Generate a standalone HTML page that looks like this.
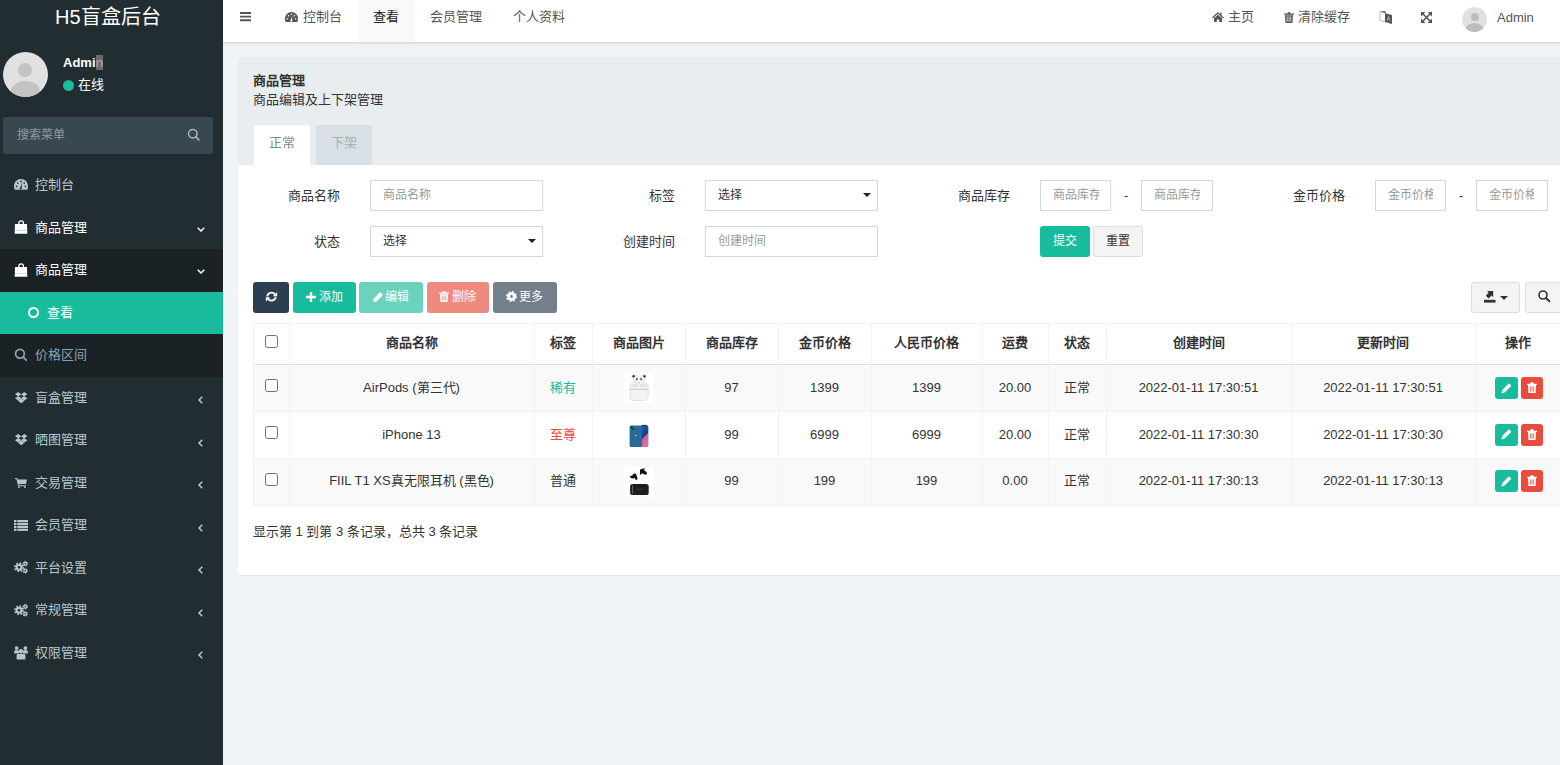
<!DOCTYPE html>
<html lang="zh-CN"><head><meta charset="utf-8">
<style>
*{box-sizing:border-box;margin:0;padding:0}
html,body{width:1560px;height:765px;overflow:hidden}
body{font-family:"Liberation Sans",sans-serif;font-size:13px;color:#333;background:#f1f4f6;position:relative}
.a{position:absolute}
.t{position:absolute;white-space:nowrap}
svg{position:absolute;display:block;overflow:visible}
#sb{left:0;top:0;width:223px;height:765px;background:#222d32}
.mi{position:absolute;left:0;width:223px;height:42.5px}
.mi .tx{position:absolute;left:35px;top:0;line-height:42px;font-size:13px;color:#b8c7ce;white-space:nowrap}
#hd{left:223px;top:0;width:1337px;height:42px;background:#fff}
.nt{position:absolute;top:0;height:42px;line-height:33px;color:#555;font-size:13px;white-space:nowrap}
#pn{left:238px;top:57px;width:1340px;height:518px;background:#fff;border-radius:3px;overflow:hidden;box-shadow:0 1px 1px rgba(0,0,0,.06)}
.lbl{position:absolute;font-size:13px;color:#333;line-height:31px;white-space:nowrap;text-align:right}
.inp{position:absolute;height:31px;border:1px solid #d2d6de;background:#fff;font-size:12px;color:#999;line-height:29px;padding-left:12px;white-space:nowrap;overflow:hidden}
.btn{position:absolute;height:31px;top:282px;border-radius:3px;color:#fff;font-size:12px;line-height:31px;white-space:nowrap}
.hl{position:absolute;background:#f2f2f2}
.th{position:absolute;top:323px;height:41px;line-height:40px;text-align:center;font-weight:bold;font-size:13px;color:#333;white-space:nowrap}
.td{position:absolute;height:46.5px;line-height:46px;text-align:center;font-size:13px;color:#333;white-space:nowrap}
.cb{position:absolute;left:265px;width:13px;height:13px;border:1.3px solid #6f6f6f;border-radius:2.5px;background:#fff}
.ob{position:absolute;width:22px;height:22px;border-radius:3px}
</style></head><body>

<!-- SIDEBAR -->
<div id="sb" class="a">
  <div class="t" style="left:55px;top:4px;font-size:20px;line-height:26px;color:#fff">H5盲盒后台</div>
  <div class="a" style="left:3px;top:52px;width:45px;height:45px;border-radius:50%;background:#e1e1e1;overflow:hidden">
    <div class="a" style="left:15px;top:11px;width:14px;height:14px;border-radius:50%;background:#c3c3c3"></div>
    <div class="a" style="left:8px;top:29px;width:29px;height:20px;border-radius:50%;background:#c3c3c3"></div>
  </div>
  <div class="t" style="left:63px;top:54px;font-size:13px;font-weight:bold;color:#fff;line-height:18px">Admi<span style="background:#6b6b6b;color:#9a9a9a">n</span></div>
  <div class="a" style="left:63px;top:80px;width:11px;height:11px;border-radius:50%;background:#18bc9c"></div>
  <div class="t" style="left:78px;top:76px;font-size:13px;color:#fff;line-height:18px">在线</div>
  <div class="a" style="left:3px;top:117px;width:210px;height:37px;border-radius:3px;background:#374850">
    <div class="t" style="left:14px;top:0;line-height:37px;font-size:12px;color:#999">搜索菜单</div>
    <svg style="left:185px;top:12.3px" width="12" height="12" viewBox="0 0 12 12"><circle cx="4.8" cy="4.8" r="4.2" fill="none" stroke="#b4b4b4" stroke-width="1.5"/><path d="M7.8 7.8L11 11" stroke="#b4b4b4" stroke-width="1.7" stroke-linecap="round"/></svg>
  </div>

  <div class="mi" style="top:164px">
    <svg style="left:14px;top:15.2px" width="14" height="10.8" viewBox="0 0 14 10.8"><path d="M7 0C3 0 0 3.2 0 7.2c0 1.3.3 2.5.7 3.6h12.6c.4-1.1.7-2.3.7-3.6C14 3.2 11 0 7 0z" fill="#b8c7ce"/><g fill="#222d32"><circle cx="2.6" cy="7.3" r=".85"/><circle cx="3.8" cy="4" r=".85"/><circle cx="7" cy="2.4" r=".85"/><circle cx="10.2" cy="4" r=".85"/><circle cx="11.4" cy="7.3" r=".85"/><path d="M8.1 3.6L7.6 8.3A1.15 1.15 0 1 1 6.4 8.2z"/></g></svg>
    <div class="tx">控制台</div>
  </div>
  <div class="mi" style="top:206.5px">
    <svg style="left:14px;top:13.5px" width="14" height="14" viewBox="0 0 14 14"><path d="M1 4h12l.3 9.8H.7z" fill="#fff"/><path d="M4.85 6.5V3.1a2.3 2.3 0 0 1 4.6 0V6.5" fill="none" stroke="#fff" stroke-width="1.3"/><path d="M1 10.4h12" stroke="#c8c8c8" stroke-width=".8"/></svg>
    <div class="tx" style="color:#fff">商品管理</div>
    <svg style="left:197px;top:20px" width="8" height="5" viewBox="0 0 8 5"><path d="M.7.7L4 4 7.3.7" fill="none" stroke="#fff" stroke-width="1.5"/></svg>
  </div>
  <div class="mi" style="top:249px;background:#1a2226">
    <svg style="left:14px;top:13.5px" width="14" height="14" viewBox="0 0 14 14"><path d="M1 4h12l.3 9.8H.7z" fill="#fff"/><path d="M4.85 6.5V3.1a2.3 2.3 0 0 1 4.6 0V6.5" fill="none" stroke="#fff" stroke-width="1.3"/><path d="M1 10.4h12" stroke="#c8c8c8" stroke-width=".8"/></svg>
    <div class="tx" style="color:#fff">商品管理</div>
    <svg style="left:197px;top:20px" width="8" height="5" viewBox="0 0 8 5"><path d="M.7.7L4 4 7.3.7" fill="none" stroke="#fff" stroke-width="1.5"/></svg>
  </div>
  <div class="mi" style="top:291.5px;background:#18bc9c">
    <div class="a" style="left:28px;top:15.5px;width:11px;height:11px;border-radius:50%;border:2px solid #fff"></div>
    <div class="tx" style="left:47px;color:#fff">查看</div>
  </div>
  <div class="mi" style="top:334px;background:#1a2226">
    <svg style="left:15px;top:15px" width="12" height="12" viewBox="0 0 12 12"><circle cx="4.95" cy="4.8" r="4.4" fill="none" stroke="#8aa4af" stroke-width="1.7"/><path d="M8.3 8.2L11.3 11.2" stroke="#8aa4af" stroke-width="1.9" stroke-linecap="round"/></svg>
    <div class="tx" style="color:#8aa4af">价格区间</div>
  </div>
  <div class="mi" style="top:376.5px">
    <svg style="left:14.8px;top:15.2px" width="12.4" height="11.6" viewBox="0 0 12 11"><path d="M3 0L0 2 3 4 0 6 3 8 6 6 9 8 12 6 9 4 12 2 9 0 6 2z M6 2.3L8.6 4 6 5.7 3.4 4z" fill="#b8c7ce" fill-rule="evenodd"/><path d="M2.8 8.3L6 10.9 9.2 8.3 6 6.3z" fill="#b8c7ce"/></svg>
    <div class="tx">盲盒管理</div>
    <svg style="left:198px;top:19.5px" width="5" height="8" viewBox="0 0 5 8"><path d="M4.3.7L1 4l3.3 3.3" fill="none" stroke="#b8c7ce" stroke-width="1.5"/></svg>
  </div>
  <div class="mi" style="top:419px">
    <svg style="left:14.8px;top:15.2px" width="12.4" height="11.6" viewBox="0 0 12 11"><path d="M3 0L0 2 3 4 0 6 3 8 6 6 9 8 12 6 9 4 12 2 9 0 6 2z M6 2.3L8.6 4 6 5.7 3.4 4z" fill="#b8c7ce" fill-rule="evenodd"/><path d="M2.8 8.3L6 10.9 9.2 8.3 6 6.3z" fill="#b8c7ce"/></svg>
    <div class="tx">晒图管理</div>
    <svg style="left:198px;top:19.5px" width="5" height="8" viewBox="0 0 5 8"><path d="M4.3.7L1 4l3.3 3.3" fill="none" stroke="#b8c7ce" stroke-width="1.5"/></svg>
  </div>
  <div class="mi" style="top:461.5px">
    <svg style="left:15px;top:16.5px" width="12" height="10" viewBox="0 0 12 10"><path d="M0 0h2.2l.5 1.5H12l-1 4.5H3.6l.4 1.2H11v1H3.2L1.4 1H0z" fill="#b8c7ce"/><circle cx="4" cy="9.2" r=".9" fill="#b8c7ce"/><circle cx="10" cy="9.2" r=".9" fill="#b8c7ce"/></svg>
    <div class="tx">交易管理</div>
    <svg style="left:198px;top:19.5px" width="5" height="8" viewBox="0 0 5 8"><path d="M4.3.7L1 4l3.3 3.3" fill="none" stroke="#b8c7ce" stroke-width="1.5"/></svg>
  </div>
  <div class="mi" style="top:504px">
    <svg style="left:14px;top:15.5px" width="14" height="11" viewBox="0 0 14 11"><g fill="#b8c7ce"><rect x="0" y="0" width="2.5" height="2.2"/><rect x="0" y="2.9" width="2.5" height="2.2"/><rect x="0" y="5.8" width="2.5" height="2.2"/><rect x="0" y="8.7" width="2.5" height="2.2"/><rect x="3.3" y="0" width="10.7" height="2.2"/><rect x="3.3" y="2.9" width="10.7" height="2.2"/><rect x="3.3" y="5.8" width="10.7" height="2.2"/><rect x="3.3" y="8.7" width="10.7" height="2.2"/></g></svg>
    <div class="tx">会员管理</div>
    <svg style="left:198px;top:19.5px" width="5" height="8" viewBox="0 0 5 8"><path d="M4.3.7L1 4l3.3 3.3" fill="none" stroke="#b8c7ce" stroke-width="1.5"/></svg>
  </div>
  <div class="mi" style="top:546.5px">
    <svg style="left:14px;top:14.6px" width="14.2" height="13.2" viewBox="0 0 15 14"><g fill="none" stroke="#b8c7ce"><circle cx="5.3" cy="6.7" r="2.6" stroke-width="2.3"/><circle cx="5.3" cy="6.7" r="4.4" stroke-width="1.8" stroke-dasharray="1.75 1.7"/><circle cx="11.9" cy="2.9" r="1.55" stroke-width="1.5"/><circle cx="11.9" cy="2.9" r="2.6" stroke-width="1" stroke-dasharray="1.2 1.52"/><circle cx="11.9" cy="10.4" r="1.55" stroke-width="1.5"/><circle cx="11.9" cy="10.4" r="2.6" stroke-width="1" stroke-dasharray="1.2 1.52"/></g></svg>
    <div class="tx">平台设置</div>
    <svg style="left:198px;top:19.5px" width="5" height="8" viewBox="0 0 5 8"><path d="M4.3.7L1 4l3.3 3.3" fill="none" stroke="#b8c7ce" stroke-width="1.5"/></svg>
  </div>
  <div class="mi" style="top:589px">
    <svg style="left:14px;top:14.6px" width="14.2" height="13.2" viewBox="0 0 15 14"><g fill="none" stroke="#b8c7ce"><circle cx="5.3" cy="6.7" r="2.6" stroke-width="2.3"/><circle cx="5.3" cy="6.7" r="4.4" stroke-width="1.8" stroke-dasharray="1.75 1.7"/><circle cx="11.9" cy="2.9" r="1.55" stroke-width="1.5"/><circle cx="11.9" cy="2.9" r="2.6" stroke-width="1" stroke-dasharray="1.2 1.52"/><circle cx="11.9" cy="10.4" r="1.55" stroke-width="1.5"/><circle cx="11.9" cy="10.4" r="2.6" stroke-width="1" stroke-dasharray="1.2 1.52"/></g></svg>
    <div class="tx">常规管理</div>
    <svg style="left:198px;top:19.5px" width="5" height="8" viewBox="0 0 5 8"><path d="M4.3.7L1 4l3.3 3.3" fill="none" stroke="#b8c7ce" stroke-width="1.5"/></svg>
  </div>
  <div class="mi" style="top:631.5px">
    <svg style="left:14px;top:14px" width="14" height="14" viewBox="0 0 14 14"><g fill="#b8c7ce"><circle cx="2.6" cy="2.1" r="1.9"/><circle cx="11.4" cy="2.1" r="1.9"/><path d="M.2 7.6V5.6c0-.8.5-1.3 1.3-1.3h2.4c.8 0 1 .5 1 1.2v2.1z"/><path d="M13.8 7.6V5.6c0-.8-.5-1.3-1.3-1.3h-2.4c-.8 0-1 .5-1 1.2v2.1z"/><circle cx="7" cy="5.3" r="2.2"/><path d="M2.6 13.6V9.5c0-1 .6-1.6 1.6-1.6h5.6c1 0 1.6.6 1.6 1.6v4.1z"/></g></svg>
    <div class="tx">权限管理</div>
    <svg style="left:198px;top:19.5px" width="5" height="8" viewBox="0 0 5 8"><path d="M4.3.7L1 4l3.3 3.3" fill="none" stroke="#b8c7ce" stroke-width="1.5"/></svg>
  </div>
</div>

<!-- HEADER -->
<div id="hd" class="a">
  <svg style="left:17px;top:12px" width="11" height="9" viewBox="0 0 11 9"><path d="M0 1h11M0 4.6h11M0 8.2h11" stroke="#555" stroke-width="1.9"/></svg>
  <div class="a" style="left:135px;top:0;width:57px;height:42px;background:#f9f9f9"></div>
  <svg style="left:62px;top:11.8px" width="13" height="10" viewBox="0 0 14 10.8"><path d="M7 0C3 0 0 3.2 0 7.2c0 1.3.3 2.5.7 3.6h12.6c.4-1.1.7-2.3.7-3.6C14 3.2 11 0 7 0z" fill="#555"/><g fill="#fff"><circle cx="2.6" cy="7.3" r=".85"/><circle cx="3.8" cy="4" r=".85"/><circle cx="7" cy="2.4" r=".85"/><circle cx="10.2" cy="4" r=".85"/><circle cx="11.4" cy="7.3" r=".85"/><path d="M8.1 3.6L7.6 8.3A1.15 1.15 0 1 1 6.4 8.2z"/></g></svg>
  <div class="nt" style="left:80px">控制台</div>
  <div class="nt" style="left:150px;color:#222">查看</div>
  <div class="nt" style="left:207px">会员管理</div>
  <div class="nt" style="left:290px">个人资料</div>
  <svg style="left:989px;top:12px" width="12" height="10" viewBox="0 0 12 10"><path d="M6 0L0 5.6l.8.9L6 1.8l5.2 4.7.8-.9L9.6 3.4V.6H8.2v1.6z" fill="#555"/><path d="M2 6.2L6 2.7l4 3.5V10H7.2V7.4H4.8V10H2z" fill="#555"/></svg>
  <div class="nt" style="left:1005px">主页</div>
  <svg style="left:1061px;top:12px" width="10" height="11" viewBox="0 0 10 11"><path d="M0 1.6h10v1.2H0z M3.3 1.6l.6-1.4h2.2l.6 1.4" fill="#555"/><path d="M1 3.2h8l-.5 7.8h-7z" fill="#555"/><path d="M3.2 4.3v5.5M5 4.3v5.5M6.8 4.3v5.5" stroke="#fff" stroke-width=".7"/></svg>
  <div class="nt" style="left:1075px">清除缓存</div>
  <svg style="left:1157px;top:11px" width="12" height="13" viewBox="0 0 12 13"><path d="M0 .5L5.5 2.3V11L0 9.2z" fill="none" stroke="#aaa" stroke-width=".8"/><path d="M5 2.2L12 4v9L5 11z" fill="#555"/><path d="M7.3 9.5l1.2-4 1.2 4M7.8 8h1.4" stroke="#ddd" stroke-width=".6" fill="none"/><path d="M0 .5L5 0 6 2z" fill="#555"/></svg>
  <svg style="left:1198px;top:11.8px" width="11" height="11" viewBox="0 0 11 11"><path d="M0 0h4.4L0 4.4z M11 0v4.4L6.6 0z M0 11V6.6L4.4 11z M11 11H6.6L11 6.6z" fill="#555"/><path d="M1.2 1.2L9.8 9.8M9.8 1.2L1.2 9.8" stroke="#555" stroke-width="1.6"/></svg>
  <div class="a" style="left:1239px;top:7px;width:25px;height:25px;border-radius:50%;background:#e1e1e1;overflow:hidden">
    <div class="a" style="left:8.5px;top:6px;width:8px;height:8px;border-radius:50%;background:#bdbdbd"></div>
    <div class="a" style="left:4px;top:16px;width:17px;height:11px;border-radius:50%;background:#bdbdbd"></div>
  </div>
  <div class="nt" style="left:1274px;top:1px">Admin</div>
</div>
<div class="a" style="left:223px;top:42px;width:1337px;height:1px;background:#d8dcdf"></div>
<div class="a" style="left:223px;top:43px;width:1337px;height:3px;background:linear-gradient(#e2e6ea,#f1f4f6)"></div>

<!-- PANEL -->
<div id="pn" class="a">
  <div class="a" style="left:0;top:0;width:100%;height:108px;background:#e8edf0">
    <div class="t" style="left:15px;top:14px;line-height:20px;font-weight:bold">商品管理</div>
    <div class="t" style="left:15px;top:33px;line-height:20px">商品编辑及上下架管理</div>
    <div class="a" style="left:16px;top:68px;width:56px;height:40px;background:#fff;border-radius:3px 3px 0 0;color:#7b8a8b;line-height:36px;text-align:center">正常</div>
    <div class="a" style="left:78px;top:68px;width:56px;height:40px;background:#d8dfe5;border-radius:3px 3px 0 0;color:#a5b1b2;line-height:36px;text-align:center">下架</div>
  </div>
</div>

<!-- FORM -->
<div class="lbl" style="left:240px;width:100px;top:180px">商品名称</div>
<div class="inp" style="left:370px;top:180px;width:173px">商品名称</div>
<div class="lbl" style="left:575px;width:100px;top:180px">标签</div>
<div class="inp" style="left:705px;top:180px;width:173px;color:#333">选择</div>
<svg style="left:863px;top:193px" width="8" height="4" viewBox="0 0 8 4"><path d="M0 0h8L4 4z" fill="#222"/></svg>
<div class="lbl" style="left:910px;width:100px;top:180px">商品库存</div>
<div class="inp" style="left:1040px;top:180px;width:71px"><div style="width:46px;overflow:hidden">商品库存</div></div>
<div class="t" style="left:1124px;top:180px;line-height:31px">-</div>
<div class="inp" style="left:1141px;top:180px;width:72px"><div style="width:46px;overflow:hidden">商品库存</div></div>
<div class="lbl" style="left:1245px;width:100px;top:180px">金币价格</div>
<div class="inp" style="left:1375px;top:180px;width:71px"><div style="width:45px;overflow:hidden">金币价格</div></div>
<div class="t" style="left:1459px;top:180px;line-height:31px">-</div>
<div class="inp" style="left:1476px;top:180px;width:72px"><div style="width:45px;overflow:hidden">金币价格</div></div>

<div class="lbl" style="left:240px;width:100px;top:226px">状态</div>
<div class="inp" style="left:370px;top:226px;width:173px;color:#333">选择</div>
<svg style="left:528px;top:239px" width="8" height="4" viewBox="0 0 8 4"><path d="M0 0h8L4 4z" fill="#222"/></svg>
<div class="lbl" style="left:575px;width:100px;top:226px">创建时间</div>
<div class="inp" style="left:705px;top:226px;width:173px">创建时间</div>
<div class="a" style="left:1040px;top:226px;width:50px;height:31px;background:#18bc9c;border-radius:3px;color:#fff;font-size:12px;line-height:31px;text-align:center">提交</div>
<div class="a" style="left:1093px;top:226px;width:50px;height:31px;background:#f4f4f4;border:1px solid #ddd;border-radius:3px;color:#333;font-size:12px;line-height:29px;text-align:center">重置</div>

<!-- TOOLBAR -->
<div class="btn" style="left:253px;width:36px;background:#2c3e50">
  <svg style="left:13px;top:9px" width="11" height="11" viewBox="0 0 11 11"><path d="M1.2 5.4A4.3 4.3 0 0 1 8.9 3.4" fill="none" stroke="#fff" stroke-width="1.8"/><path d="M11.1 .9v4.3H6.8z" fill="#fff"/><path d="M9.8 5.9A4.3 4.3 0 0 1 2.1 7.9" fill="none" stroke="#fff" stroke-width="1.8"/><path d="M-.1 10.6V6.3h4.3z" fill="#fff"/></svg>
</div>
<div class="btn" style="left:293px;width:63px;background:#18bc9c">
  <svg style="left:13px;top:9.5px" width="10" height="10" viewBox="0 0 10 10"><path d="M3.8 0h2.4v3.8H10v2.4H6.2V10H3.8V6.2H0V3.8h3.8z" fill="#fff"/></svg>
  <span class="t" style="left:26px;top:0">添加</span>
</div>
<div class="btn" style="left:359px;width:64px;background:#6bd3bd">
  <svg style="left:13px;top:9.7px" width="11" height="11" viewBox="0 0 11 11"><path d="M8 0l3 3-6.8 6.8-3 .2.2-3z" fill="#fff"/></svg>
  <span class="t" style="left:26px;top:0">编辑</span>
</div>
<div class="btn" style="left:427px;width:62px;background:#ef8a80">
  <svg style="left:12px;top:9px" width="10" height="11" viewBox="0 0 10 11"><path d="M0 1.6h10v1.2H0z M3.3 1.6l.6-1.4h2.2l.6 1.4" fill="#fff"/><path d="M1 3.2h8l-.5 7.8h-7z" fill="#fff"/><path d="M3.4 4.5v5M5 4.5v5M6.6 4.5v5" stroke="#ef8a80" stroke-width=".7"/></svg>
  <span class="t" style="left:25px;top:0">删除</span>
</div>
<div class="btn" style="left:493px;width:64px;background:#737f8a">
  <svg style="left:12.8px;top:8.8px" width="11" height="11" viewBox="0 0 11 11"><circle cx="5.5" cy="5.5" r="2.9" fill="none" stroke="#fff" stroke-width="3"/><circle cx="5.5" cy="5.5" r="4.6" fill="none" stroke="#fff" stroke-width="1.8" stroke-dasharray="1.8 1.81"/></svg>
  <span class="t" style="left:26px;top:0">更多</span>
</div>

<div class="a" style="left:1471px;top:282px;width:49px;height:31px;background:#f4f4f4;border:1px solid #ddd;border-radius:3px">
  <svg style="left:12px;top:7.5px" width="12" height="12" viewBox="0 0 12 12"><path d="M3 0h6.2v6.2L7.6 4.6 4.6 7.6 1.8 4.8 4.6 1.6z" fill="#333"/><path d="M0 8.8h11.5v2.8H0z" fill="#333"/></svg>
  <svg style="left:27.5px;top:13px" width="8" height="4" viewBox="0 0 8 4"><path d="M0 0h8L4 4z" fill="#333"/></svg>
</div>
<div class="a" style="left:1525px;top:282px;width:48px;height:31px;background:#f4f4f4;border:1px solid #ddd;border-radius:3px">
  <svg style="left:12px;top:6.8px" width="13" height="12" viewBox="0 0 13 12"><circle cx="5" cy="5" r="4" fill="none" stroke="#333" stroke-width="1.6"/><path d="M8 8L11.3 11.2" stroke="#333" stroke-width="2" stroke-linecap="round"/></svg>
</div>

<!-- TABLE -->
<div class="a" style="left:253px;top:323px;width:1320px;height:182px;background:#fff"></div>
<div class="a" style="left:253px;top:365px;width:1320px;height:46.5px;background:#f9f9f9"></div>
<div class="a" style="left:253px;top:458px;width:1320px;height:47px;background:#f9f9f9"></div>
<div class="hl" style="left:253px;top:323px;width:1320px;height:1px"></div>
<div class="hl" style="left:253px;top:364px;width:1320px;height:1px;background:#ddd"></div>
<div class="hl" style="left:253px;top:411px;width:1320px;height:1px"></div>
<div class="hl" style="left:253px;top:458px;width:1320px;height:1px"></div>
<div class="hl" style="left:253px;top:505px;width:1320px;height:1px"></div>
<div class="hl" style="left:253px;top:323px;width:1px;height:183px"></div>
<div class="hl" style="left:289px;top:323px;width:1px;height:183px"></div>
<div class="hl" style="left:534px;top:323px;width:1px;height:183px"></div>
<div class="hl" style="left:592px;top:323px;width:1px;height:183px"></div>
<div class="hl" style="left:685px;top:323px;width:1px;height:183px"></div>
<div class="hl" style="left:778px;top:323px;width:1px;height:183px"></div>
<div class="hl" style="left:871px;top:323px;width:1px;height:183px"></div>
<div class="hl" style="left:982px;top:323px;width:1px;height:183px"></div>
<div class="hl" style="left:1048px;top:323px;width:1px;height:183px"></div>
<div class="hl" style="left:1106px;top:323px;width:1px;height:183px"></div>
<div class="hl" style="left:1291px;top:323px;width:1px;height:183px"></div>
<div class="hl" style="left:1475px;top:323px;width:1px;height:183px"></div>

<div class="cb" style="top:335px"></div>
<div class="th" style="left:289px;width:245px">商品名称</div>
<div class="th" style="left:534px;width:58px">标签</div>
<div class="th" style="left:592px;width:93px">商品图片</div>
<div class="th" style="left:685px;width:93px">商品库存</div>
<div class="th" style="left:778px;width:93px">金币价格</div>
<div class="th" style="left:871px;width:111px">人民币价格</div>
<div class="th" style="left:982px;width:66px">运费</div>
<div class="th" style="left:1048px;width:58px">状态</div>
<div class="th" style="left:1106px;width:185px">创建时间</div>
<div class="th" style="left:1291px;width:184px">更新时间</div>
<div class="th" style="left:1475px;width:86px">操作</div>

<!-- rows -->
<div class="cb" style="top:379px"></div>
<div class="td" style="left:289px;width:245px;top:365px">AirPods (第三代)</div>
<div class="td" style="left:534px;width:58px;top:365px;color:#18bc9c">稀有</div>
<div class="td" style="left:685px;width:93px;top:365px">97</div>
<div class="td" style="left:778px;width:93px;top:365px">1399</div>
<div class="td" style="left:871px;width:111px;top:365px">1399</div>
<div class="td" style="left:982px;width:66px;top:365px">20.00</div>
<div class="td" style="left:1048px;width:58px;top:365px">正常</div>
<div class="td" style="left:1106px;width:185px;top:365px">2022-01-11 17:30:51</div>
<div class="td" style="left:1291px;width:184px;top:365px">2022-01-11 17:30:51</div>

<div class="cb" style="top:426px"></div>
<div class="td" style="left:289px;width:245px;top:411.5px">iPhone 13</div>
<div class="td" style="left:534px;width:58px;top:411.5px;color:#e74c3c">至尊</div>
<div class="td" style="left:685px;width:93px;top:411.5px">99</div>
<div class="td" style="left:778px;width:93px;top:411.5px">6999</div>
<div class="td" style="left:871px;width:111px;top:411.5px">6999</div>
<div class="td" style="left:982px;width:66px;top:411.5px">20.00</div>
<div class="td" style="left:1048px;width:58px;top:411.5px">正常</div>
<div class="td" style="left:1106px;width:185px;top:411.5px">2022-01-11 17:30:30</div>
<div class="td" style="left:1291px;width:184px;top:411.5px">2022-01-11 17:30:30</div>

<div class="cb" style="top:473px"></div>
<div class="td" style="left:289px;width:245px;top:458px">FIIL T1 XS真无限耳机 (黑色)</div>
<div class="td" style="left:534px;width:58px;top:458px">普通</div>
<div class="td" style="left:685px;width:93px;top:458px">99</div>
<div class="td" style="left:778px;width:93px;top:458px">199</div>
<div class="td" style="left:871px;width:111px;top:458px">199</div>
<div class="td" style="left:982px;width:66px;top:458px">0.00</div>
<div class="td" style="left:1048px;width:58px;top:458px">正常</div>
<div class="td" style="left:1106px;width:185px;top:458px">2022-01-11 17:30:13</div>
<div class="td" style="left:1291px;width:184px;top:458px">2022-01-11 17:30:13</div>

<!-- product images -->
<div class="a" style="left:624px;top:373px;width:30px;height:30px;background:#fff">
  <svg style="left:0;top:0" width="30" height="30" viewBox="0 0 30 30">
    <path d="M5.8 14.5C5.8 11 7.5 9.5 10.5 9.5h9c3 0 4.7 1.5 4.7 5v8.5c0 3-1.7 4.6-4.7 4.6h-9c-3 0-4.7-1.6-4.7-4.6z" fill="#f3f3f5" stroke="#d4d4d8" stroke-width=".7"/>
    <path d="M6 16.3h18" stroke="#c8c8cc" stroke-width=".9"/>
    <ellipse cx="10.5" cy="12.8" rx="3" ry="1.8" fill="#e2e2e6"/><ellipse cx="19.5" cy="12.8" rx="3" ry="1.8" fill="#e2e2e6"/>
    <path d="M9.8 3.5l3.6 6.6" stroke="#d0d0d4" stroke-width="3.2" stroke-linecap="round"/>
    <path d="M9.8 3.5l3.6 6.6" stroke="#fafafa" stroke-width="2" stroke-linecap="round"/>
    <path d="M20.2 3.5l-3.6 6.6" stroke="#d0d0d4" stroke-width="3.2" stroke-linecap="round"/>
    <path d="M20.2 3.5l-3.6 6.6" stroke="#fafafa" stroke-width="2" stroke-linecap="round"/>
    <ellipse cx="11.2" cy="4.7" rx="3.3" ry="2.6" transform="rotate(40 11.2 4.7)" fill="#fbfbfb" stroke="#cfcfd3" stroke-width=".7"/>
    <ellipse cx="18.8" cy="4.7" rx="3.3" ry="2.6" transform="rotate(-40 18.8 4.7)" fill="#fbfbfb" stroke="#cfcfd3" stroke-width=".7"/>
    <ellipse cx="9.6" cy="3.3" rx="1.2" ry="1.4" fill="#3a3a3a"/><ellipse cx="12.9" cy="6" rx="1" ry="1.1" fill="#4a4a4a"/>
    <ellipse cx="20.4" cy="3.3" rx="1.2" ry="1.4" fill="#3a3a3a"/><ellipse cx="17.1" cy="6" rx="1" ry="1.1" fill="#4a4a4a"/>
  </svg>
</div>
<div class="a" style="left:624px;top:420px;width:30px;height:30px;background:#fff">
  <svg style="left:0;top:0" width="30" height="30" viewBox="0 0 30 30">
    <defs><linearGradient id="scr" x1="0" y1="0" x2="0.3" y2="1"><stop offset="0" stop-color="#0d63b8"/><stop offset=".55" stop-color="#1a3a8a"/><stop offset=".62" stop-color="#c85e9e"/><stop offset="1" stop-color="#e86c9a"/></linearGradient></defs>
    <rect x="5.6" y="5.4" width="18.6" height="21.6" rx="1.6" fill="#286a93"/>
    <path d="M17.9 5.4h4.7c1 0 1.6.6 1.6 1.6v18.4c0 1-.6 1.6-1.6 1.6h-4.7z" fill="url(#scr)"/>
    <path d="M17.9 5.4h5" stroke="#111" stroke-width=".8"/>
    <circle cx="7.6" cy="7.4" r="1.1" fill="#15324a"/><circle cx="9.3" cy="9" r="1.1" fill="#15324a"/>
    <circle cx="11.8" cy="15.5" r=".7" fill="#ddd"/>
  </svg>
</div>
<div class="a" style="left:624px;top:467px;width:30px;height:30px;background:#fff">
  <svg style="left:0;top:0" width="30" height="30" viewBox="0 0 30 30">
    <rect x="6.1" y="17" width="18.6" height="11" rx="2.6" fill="#1d1d1d"/>
    <path d="M8.6 18.2v8.6" stroke="#666" stroke-width="1"/><path d="M13 22.5h5" stroke="#444" stroke-width=".8"/>
    <path d="M6 9.2l2.2-.6 1.6-2 2.2.2 .8 2.3.8 2.6-.8 1.3-1.5-.4-.6-1.6-2.4.6-1.9-.8z" fill="#111"/>
    <path d="M16 2.4l2.8-.6 1.4-.9.6.8-1 1.4 2.8 1.8.5 1.9-1.4 1-1.8-.6-1.6-1-1.5 1.6-.9-.4z" fill="#111"/>
  </svg>
</div>
<!-- op buttons -->
<div class="ob" style="width:23px;left:1495px;top:377px;background:#18bc9c"><svg style="left:6px;top:5.7px" width="11" height="10.5" viewBox="0 0 11 10.5"><path d="M7.8 0.3l2.6 2.5-6.7 6.7-3.3.9.8-3.4z" fill="#fff"/><path d="M1.6 7.2l2 2" stroke="#18bc9c" stroke-width=".6"/></svg></div>
<div class="ob" style="left:1521px;top:377px;background:#e74c3c"><svg style="left:6px;top:5px" width="10" height="11" viewBox="0 0 10 11"><path d="M0 1.8h10v1.3H0z M3.2 1.8l.5-1.5h2.6l.5 1.5" fill="#fff"/><path d="M1 3.1h8l-.4 7.9H1.4z" fill="#fff"/><path d="M3.4 4.4v5.2M5 4.4v5.2M6.6 4.4v5.2" stroke="#e74c3c" stroke-width=".75"/></svg></div>
<div class="ob" style="width:23px;left:1495px;top:423.5px;background:#18bc9c"><svg style="left:6px;top:5.7px" width="11" height="10.5" viewBox="0 0 11 10.5"><path d="M7.8 0.3l2.6 2.5-6.7 6.7-3.3.9.8-3.4z" fill="#fff"/><path d="M1.6 7.2l2 2" stroke="#18bc9c" stroke-width=".6"/></svg></div>
<div class="ob" style="left:1521px;top:423.5px;background:#e74c3c"><svg style="left:6px;top:5px" width="10" height="11" viewBox="0 0 10 11"><path d="M0 1.8h10v1.3H0z M3.2 1.8l.5-1.5h2.6l.5 1.5" fill="#fff"/><path d="M1 3.1h8l-.4 7.9H1.4z" fill="#fff"/><path d="M3.4 4.4v5.2M5 4.4v5.2M6.6 4.4v5.2" stroke="#e74c3c" stroke-width=".75"/></svg></div>
<div class="ob" style="width:23px;left:1495px;top:470px;background:#18bc9c"><svg style="left:6px;top:5.7px" width="11" height="10.5" viewBox="0 0 11 10.5"><path d="M7.8 0.3l2.6 2.5-6.7 6.7-3.3.9.8-3.4z" fill="#fff"/><path d="M1.6 7.2l2 2" stroke="#18bc9c" stroke-width=".6"/></svg></div>
<div class="ob" style="left:1521px;top:470px;background:#e74c3c"><svg style="left:6px;top:5px" width="10" height="11" viewBox="0 0 10 11"><path d="M0 1.8h10v1.3H0z M3.2 1.8l.5-1.5h2.6l.5 1.5" fill="#fff"/><path d="M1 3.1h8l-.4 7.9H1.4z" fill="#fff"/><path d="M3.4 4.4v5.2M5 4.4v5.2M6.6 4.4v5.2" stroke="#e74c3c" stroke-width=".75"/></svg></div>
<div class="t" style="left:253px;top:522px;line-height:20px">显示第 1 到第 3 条记录，总共 3 条记录</div>
</body></html>
